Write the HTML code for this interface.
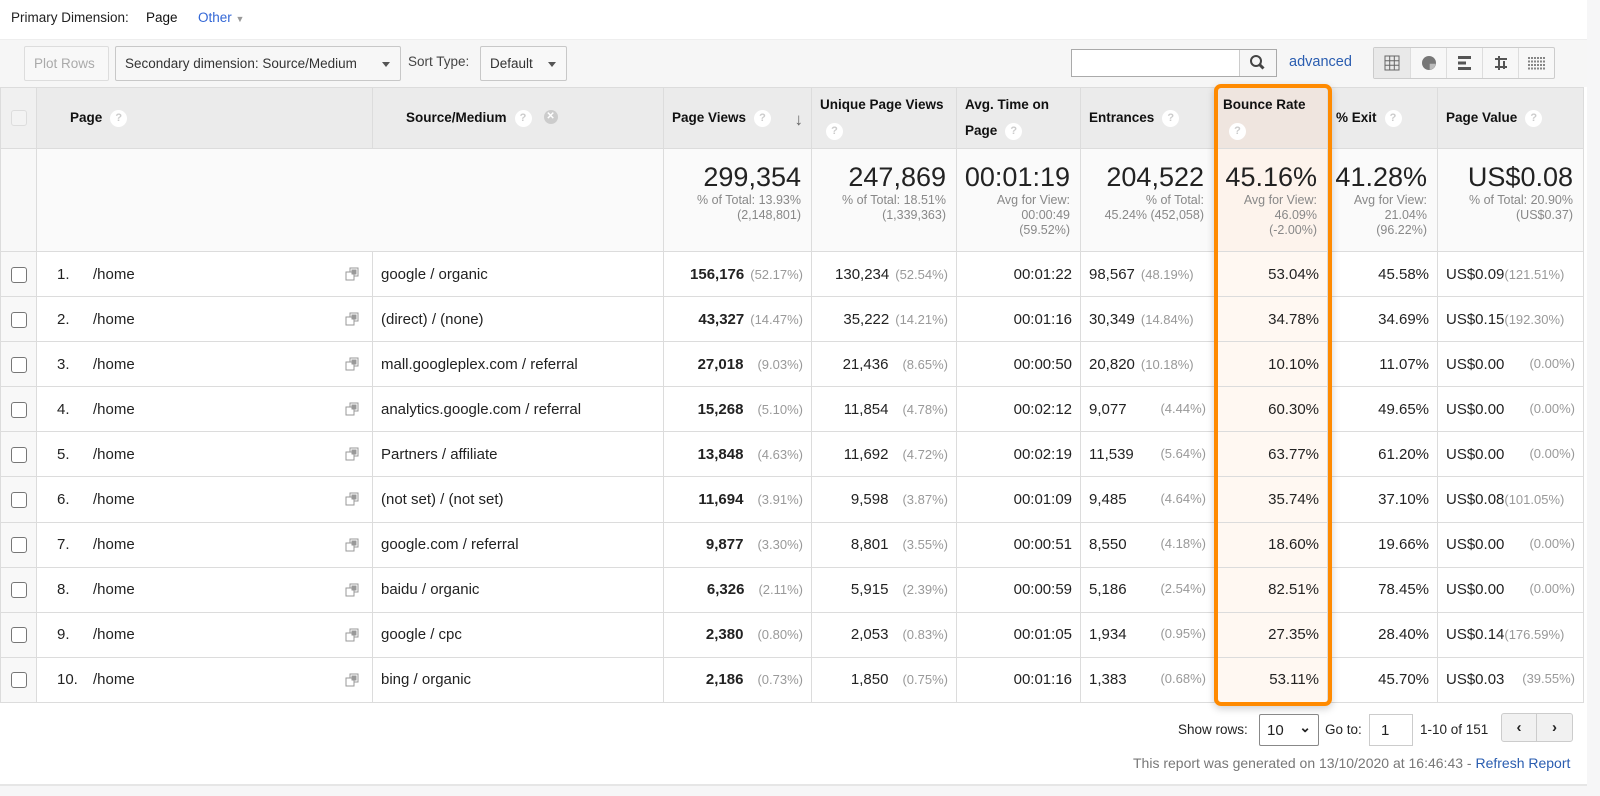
<!DOCTYPE html>
<html><head><meta charset="utf-8"><style>
*{box-sizing:border-box;margin:0;padding:0}
body{width:1600px;height:796px;background:#f6f6f7;font-family:"Liberation Sans",Arial,sans-serif;color:#222;position:relative;overflow:hidden}
#panel{position:absolute;left:0;top:0;width:1587px;height:786px;background:#fff;border-bottom:2px solid #e6e6e6}
.pd{position:absolute;left:11px;top:10px;font-size:13.5px;color:#222}
.pd a{color:#3367d6;text-decoration:none;position:absolute;left:187px;top:0;white-space:nowrap}
.tb{position:absolute;left:0;top:39px;width:1587px;height:48px;background:#f6f6f6;border-top:1px solid #eee}
.btn{position:absolute;top:6px;height:35px;border:1px solid #c8c8c8;border-radius:2px;background:#f8f8f8;font-size:13.5px;line-height:33px;padding:0 9px;color:#333;white-space:nowrap}
.tri{position:absolute;right:10px;top:15px;width:0;height:0;border-left:4px solid transparent;border-right:4px solid transparent;border-top:5px solid #555}
table{position:absolute;left:0;top:87px;border-collapse:collapse;table-layout:fixed;width:1583px}
td,th{border:1px solid #dcdcdc;font-size:15px;overflow:hidden;white-space:nowrap}
th{background:#ebebeb;font-weight:bold;font-size:13.5px;text-align:left;padding:0 8px;height:61px;color:#111}
.q{display:inline-block;width:17px;height:17px;border-radius:50%;background:#fff;color:#ccc;font-size:11px;text-align:center;line-height:17px;font-weight:bold;margin-left:8px;vertical-align:middle}
.tot td{height:103px;background:#fafafa;vertical-align:top;text-align:right;padding:12px 10px 0 4px}
.big{font-size:27px;color:#222;line-height:32px}
.sm{font-size:12.5px;color:#888;line-height:15px;white-space:normal}
tr.r td{height:45.1px;padding:0 8px;position:relative}
td.c{background:#f8f8f8;text-align:center;padding:0!important}
.cb{display:inline-block;width:16px;height:16px;border:1px solid #777;border-radius:3px;background:#fff;vertical-align:middle}
.n{text-align:right}
.g{color:#999;font-size:13px;margin-left:6px}
.br{background:#fff8f2!important}
.num{display:inline-block;width:36px;padding-left:12px;box-sizing:content-box}
.ic{position:absolute;right:12px;top:14px}
#ob{position:absolute;left:1214px;top:84px;width:118px;height:622px;border:4px solid #ff8a00;border-radius:7px;box-shadow:0 3px 8px rgba(0,0,0,.18)}
.foot{position:absolute;font-size:13.5px;color:#222;white-space:nowrap}
</style></head><body>
<div id="panel">
<div class="pd">Primary Dimension: <span style="position:absolute;left:135px;top:0;color:#111">Page</span><a>Other <span style="font-size:9px;color:#999">▼</span></a></div>
<div class="tb">
<div class="btn" style="left:24px;width:85px;color:#aaa;border-color:#ddd">Plot Rows</div>
<div class="btn" style="left:115px;width:286px;background:#f7f7f7">Secondary dimension: Source/Medium<span class="tri"></span></div>
<div style="position:absolute;left:408px;top:14px;font-size:13.5px;color:#444">Sort Type:</div>
<div class="btn" style="left:480px;width:87px">Default<span class="tri"></span></div>
<div style="position:absolute;left:1071px;top:9px;width:206px;height:28px;border:1px solid #aaa;background:#fff"><div style="position:absolute;right:0;top:0;width:37px;height:26px;border-left:1px solid #ccc;background:#f6f6f6"><svg width="37" height="26" viewBox="0 0 37 26"><circle cx="16" cy="11" r="5" fill="none" stroke="#444" stroke-width="2"/><path d="M19.5 14.5l4 4" stroke="#444" stroke-width="3"/></svg></div></div>
<div style="position:absolute;left:1289px;top:14px;font-size:14.5px;color:#2a5db0">advanced</div>
<div style="position:absolute;left:1373px;top:7px;width:182px;height:32px;border:1px solid #ccc;border-radius:2px;background:#f7f7f7;display:flex">
<div style="width:37px;border-right:1px solid #ddd;background:#e9e9e9"><svg width="36" height="30"><g stroke="#666" fill="none"><rect x="11" y="8" width="14" height="14"/><path d="M15.7 8v14M20.3 8v14M11 12.7h14M11 17.3h14"/></g></svg></div>
<div style="width:36px;border-right:1px solid #ddd"><svg width="36" height="30"><circle cx="18" cy="15" r="7" fill="#777"/><path d="M18.7 15.7h6a6.5 6.5 0 0 1-6 6z" fill="#bbb"/></svg></div>
<div style="width:36px;border-right:1px solid #ddd"><svg width="36" height="30" fill="#555"><rect x="11" y="8" width="13" height="3"/><rect x="11" y="13.5" width="8" height="3"/><rect x="11" y="19" width="13" height="3"/></svg></div>
<div style="width:36px;border-right:1px solid #ddd"><svg width="36" height="30" stroke="#555" stroke-width="2" fill="none"><path d="M12 11h12M12 19h12M16 8v14M21 13v8"/></svg></div>
<div style="width:36px"><svg width="36" height="30" stroke="#555" stroke-width="1.4"><path d="M10 9v13M13 9v13M16 9v13M19 9v13M22 9v13M25 9v13" stroke-dasharray="2 1.5"/></svg></div>
</div>
</div>
<table>
<colgroup><col style="width:36px"><col style="width:336px"><col style="width:291px"><col style="width:148px"><col style="width:145px"><col style="width:124px"><col style="width:134px"><col style="width:113px"><col style="width:110px"><col style="width:146px"></colgroup>
<tr><th style="background:#f0f0f0;text-align:center;padding:0"><span class="cb" style="border-color:#ddd;background:#f3f3f3"></span></th>
<th style="padding-left:33px">Page<span class="q">?</span></th>
<th style="padding-left:33px">Source/Medium<span class="q">?</span><span style="display:inline-block;width:14px;height:14px;border-radius:50%;background:#ccc;color:#fff;font-size:10px;text-align:center;line-height:14px;margin-left:12px;vertical-align:top">✕</span></th>
<th style="padding-top:4px">Page Views<span class="q">?</span><span style="float:right;color:#666;font-size:17px">↓</span></th>
<th style="line-height:26px">Unique Page Views<br><span class="q" style="margin-left:6px">?</span></th>
<th style="line-height:26px">Avg. Time on<br>Page<span class="q">?</span></th>
<th>Entrances<span class="q">?</span></th>
<th style="background:#efe5df;line-height:26px">Bounce Rate<br><span class="q" style="margin-left:6px">?</span></th>
<th style="padding-left:8px">% Exit<span class="q">?</span></th>
<th>Page Value<span class="q">?</span></th></tr>
<tr class="tot"><td class="c" style="background:#f8f8f8"></td><td colspan="2"></td>
<td><div class="big">299,354</div><div class="sm">% of Total: 13.93%<br>(2,148,801)</div></td>
<td><div class="big">247,869</div><div class="sm">% of Total: 18.51%<br>(1,339,363)</div></td>
<td><div class="big">00:01:19</div><div class="sm">Avg for View:<br>00:00:49<br>(59.52%)</div></td>
<td><div class="big">204,522</div><div class="sm">% of Total:<br>45.24% (452,058)</div></td>
<td class="br" style="background:#fdf3ec!important"><div class="big">45.16%</div><div class="sm">Avg for View:<br>46.09%<br>(-2.00%)</div></td>
<td><div class="big">41.28%</div><div class="sm">Avg for View:<br>21.04%<br>(96.22%)</div></td>
<td><div class="big">US$0.08</div><div class="sm">% of Total: 20.90%<br>(US$0.37)</div></td></tr>
<tr class="r"><td class="c"><span class="cb"></span></td><td><span class="num">1.</span>/home<svg class="ic" width="16" height="16"><rect x="6" y="2" width="8" height="8" fill="none" stroke="#999"/><rect x="2" y="6" width="8" height="8" fill="#fff" stroke="#999"/><rect x="7.5" y="3.5" width="5" height="5" fill="#999"/></svg></td><td>google / organic</td><td class="n"><b>156,176</b><span class="g">(52.17%)</span></td><td class="n">130,234<span class="g">(52.54%)</span></td><td class="n">00:01:22</td><td>98,567<span class="g">(48.19%)</span></td><td class="n br">53.04%</td><td class="n">45.58%</td><td>US$0.09<span class="g" style="margin-left:0">(121.51%)</span></td></tr>
<tr class="r"><td class="c"><span class="cb"></span></td><td><span class="num">2.</span>/home<svg class="ic" width="16" height="16"><rect x="6" y="2" width="8" height="8" fill="none" stroke="#999"/><rect x="2" y="6" width="8" height="8" fill="#fff" stroke="#999"/><rect x="7.5" y="3.5" width="5" height="5" fill="#999"/></svg></td><td>(direct) / (none)</td><td class="n"><b>43,327</b><span class="g">(14.47%)</span></td><td class="n">35,222<span class="g">(14.21%)</span></td><td class="n">00:01:16</td><td>30,349<span class="g">(14.84%)</span></td><td class="n br">34.78%</td><td class="n">34.69%</td><td>US$0.15<span class="g" style="margin-left:0">(192.30%)</span></td></tr>
<tr class="r"><td class="c"><span class="cb"></span></td><td><span class="num">3.</span>/home<svg class="ic" width="16" height="16"><rect x="6" y="2" width="8" height="8" fill="none" stroke="#999"/><rect x="2" y="6" width="8" height="8" fill="#fff" stroke="#999"/><rect x="7.5" y="3.5" width="5" height="5" fill="#999"/></svg></td><td>mall.googleplex.com / referral</td><td class="n"><b>27,018</b><span class="g" style="margin-left:14px">(9.03%)</span></td><td class="n">21,436<span class="g" style="margin-left:14px">(8.65%)</span></td><td class="n">00:00:50</td><td>20,820<span class="g">(10.18%)</span></td><td class="n br">10.10%</td><td class="n">11.07%</td><td>US$0.00<span class="g" style="float:right">(0.00%)</span></td></tr>
<tr class="r"><td class="c"><span class="cb"></span></td><td><span class="num">4.</span>/home<svg class="ic" width="16" height="16"><rect x="6" y="2" width="8" height="8" fill="none" stroke="#999"/><rect x="2" y="6" width="8" height="8" fill="#fff" stroke="#999"/><rect x="7.5" y="3.5" width="5" height="5" fill="#999"/></svg></td><td>analytics.google.com / referral</td><td class="n"><b>15,268</b><span class="g" style="margin-left:14px">(5.10%)</span></td><td class="n">11,854<span class="g" style="margin-left:14px">(4.78%)</span></td><td class="n">00:02:12</td><td>9,077<span class="g" style="float:right">(4.44%)</span></td><td class="n br">60.30%</td><td class="n">49.65%</td><td>US$0.00<span class="g" style="float:right">(0.00%)</span></td></tr>
<tr class="r"><td class="c"><span class="cb"></span></td><td><span class="num">5.</span>/home<svg class="ic" width="16" height="16"><rect x="6" y="2" width="8" height="8" fill="none" stroke="#999"/><rect x="2" y="6" width="8" height="8" fill="#fff" stroke="#999"/><rect x="7.5" y="3.5" width="5" height="5" fill="#999"/></svg></td><td>Partners / affiliate</td><td class="n"><b>13,848</b><span class="g" style="margin-left:14px">(4.63%)</span></td><td class="n">11,692<span class="g" style="margin-left:14px">(4.72%)</span></td><td class="n">00:02:19</td><td>11,539<span class="g" style="float:right">(5.64%)</span></td><td class="n br">63.77%</td><td class="n">61.20%</td><td>US$0.00<span class="g" style="float:right">(0.00%)</span></td></tr>
<tr class="r"><td class="c"><span class="cb"></span></td><td><span class="num">6.</span>/home<svg class="ic" width="16" height="16"><rect x="6" y="2" width="8" height="8" fill="none" stroke="#999"/><rect x="2" y="6" width="8" height="8" fill="#fff" stroke="#999"/><rect x="7.5" y="3.5" width="5" height="5" fill="#999"/></svg></td><td>(not set) / (not set)</td><td class="n"><b>11,694</b><span class="g" style="margin-left:14px">(3.91%)</span></td><td class="n">9,598<span class="g" style="margin-left:14px">(3.87%)</span></td><td class="n">00:01:09</td><td>9,485<span class="g" style="float:right">(4.64%)</span></td><td class="n br">35.74%</td><td class="n">37.10%</td><td>US$0.08<span class="g" style="margin-left:0">(101.05%)</span></td></tr>
<tr class="r"><td class="c"><span class="cb"></span></td><td><span class="num">7.</span>/home<svg class="ic" width="16" height="16"><rect x="6" y="2" width="8" height="8" fill="none" stroke="#999"/><rect x="2" y="6" width="8" height="8" fill="#fff" stroke="#999"/><rect x="7.5" y="3.5" width="5" height="5" fill="#999"/></svg></td><td>google.com / referral</td><td class="n"><b>9,877</b><span class="g" style="margin-left:14px">(3.30%)</span></td><td class="n">8,801<span class="g" style="margin-left:14px">(3.55%)</span></td><td class="n">00:00:51</td><td>8,550<span class="g" style="float:right">(4.18%)</span></td><td class="n br">18.60%</td><td class="n">19.66%</td><td>US$0.00<span class="g" style="float:right">(0.00%)</span></td></tr>
<tr class="r"><td class="c"><span class="cb"></span></td><td><span class="num">8.</span>/home<svg class="ic" width="16" height="16"><rect x="6" y="2" width="8" height="8" fill="none" stroke="#999"/><rect x="2" y="6" width="8" height="8" fill="#fff" stroke="#999"/><rect x="7.5" y="3.5" width="5" height="5" fill="#999"/></svg></td><td>baidu / organic</td><td class="n"><b>6,326</b><span class="g" style="margin-left:14px">(2.11%)</span></td><td class="n">5,915<span class="g" style="margin-left:14px">(2.39%)</span></td><td class="n">00:00:59</td><td>5,186<span class="g" style="float:right">(2.54%)</span></td><td class="n br">82.51%</td><td class="n">78.45%</td><td>US$0.00<span class="g" style="float:right">(0.00%)</span></td></tr>
<tr class="r"><td class="c"><span class="cb"></span></td><td><span class="num">9.</span>/home<svg class="ic" width="16" height="16"><rect x="6" y="2" width="8" height="8" fill="none" stroke="#999"/><rect x="2" y="6" width="8" height="8" fill="#fff" stroke="#999"/><rect x="7.5" y="3.5" width="5" height="5" fill="#999"/></svg></td><td>google / cpc</td><td class="n"><b>2,380</b><span class="g" style="margin-left:14px">(0.80%)</span></td><td class="n">2,053<span class="g" style="margin-left:14px">(0.83%)</span></td><td class="n">00:01:05</td><td>1,934<span class="g" style="float:right">(0.95%)</span></td><td class="n br">27.35%</td><td class="n">28.40%</td><td>US$0.14<span class="g" style="margin-left:0">(176.59%)</span></td></tr>
<tr class="r"><td class="c"><span class="cb"></span></td><td><span class="num">10.</span>/home<svg class="ic" width="16" height="16"><rect x="6" y="2" width="8" height="8" fill="none" stroke="#999"/><rect x="2" y="6" width="8" height="8" fill="#fff" stroke="#999"/><rect x="7.5" y="3.5" width="5" height="5" fill="#999"/></svg></td><td>bing / organic</td><td class="n"><b>2,186</b><span class="g" style="margin-left:14px">(0.73%)</span></td><td class="n">1,850<span class="g" style="margin-left:14px">(0.75%)</span></td><td class="n">00:01:16</td><td>1,383<span class="g" style="float:right">(0.68%)</span></td><td class="n br">53.11%</td><td class="n">45.70%</td><td>US$0.03<span class="g" style="float:right">(39.55%)</span></td></tr>
</table>
<div id="ob"></div>
<div class="foot" style="left:1178px;top:722px">Show rows:</div>
<div style="position:absolute;left:1259px;top:714px;width:60px;height:32px;border:1px solid #888;border-radius:2px;font-size:15px;padding:7px 0 0 7px">10<span style="position:absolute;right:7px;top:4px;font-size:14px;font-weight:bold">⌄</span></div>
<div class="foot" style="left:1325px;top:722px">Go to:</div>
<div style="position:absolute;left:1369px;top:714px;width:44px;height:32px;border:1px solid #ccc;font-size:15px;padding:7px 0 0 11px">1</div>
<div class="foot" style="left:1420px;top:722px">1-10 of 151</div>
<div style="position:absolute;left:1501px;top:713px;width:72px;height:29px;border:1px solid #ccc;border-radius:3px;background:#f1f1f1;display:flex;font-size:15px;font-weight:bold;line-height:27px;text-align:center"><div style="width:36px;border-right:1px solid #ccc">‹</div><div style="width:36px">›</div></div>
<div class="foot" style="left:1133px;top:755px;font-size:14px;color:#777">This report was generated on 13/10/2020 at 16:46:43 - <span style="color:#2a5db0">Refresh Report</span></div>
</div>
</body></html>
